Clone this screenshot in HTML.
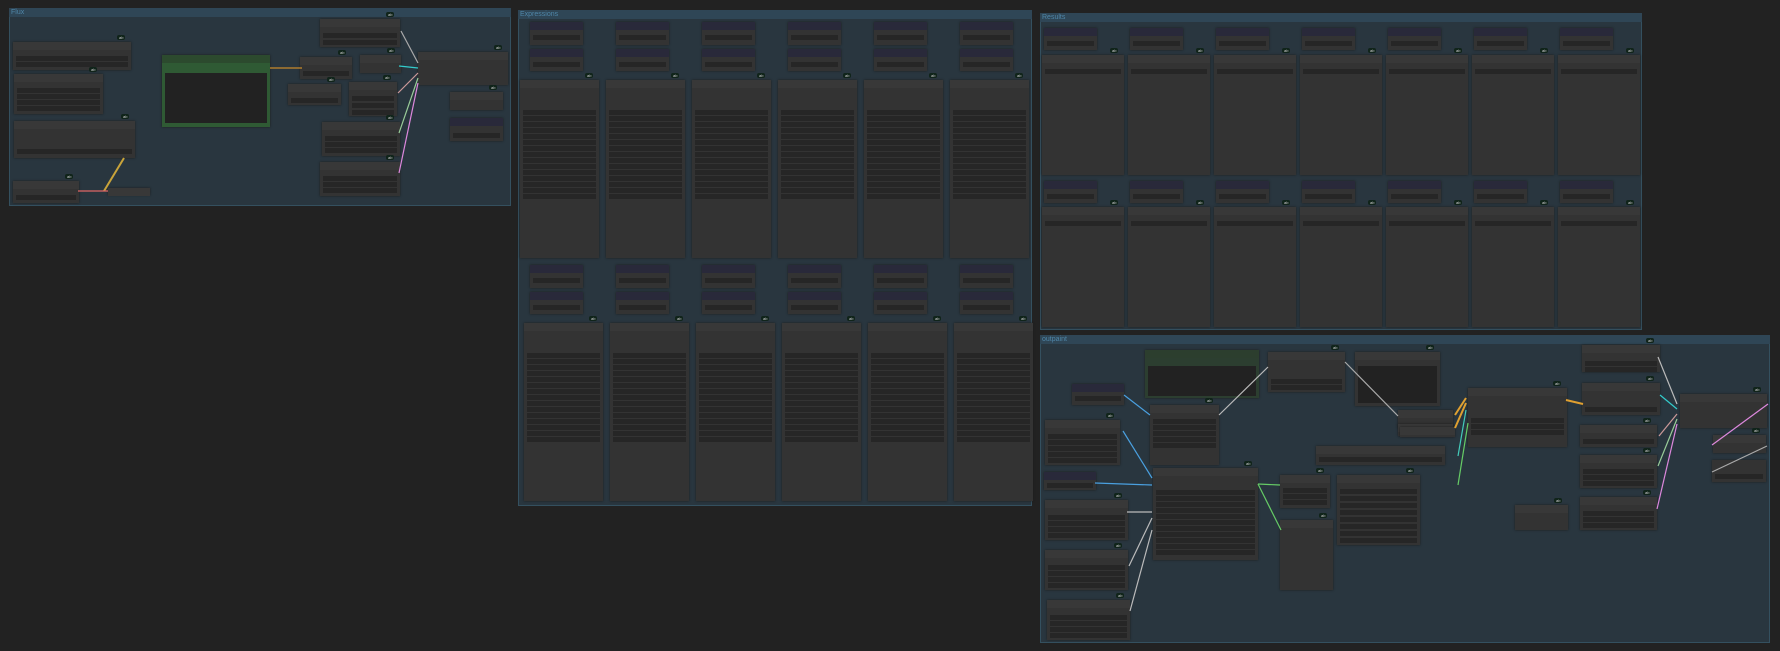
<!DOCTYPE html>
<html><head><meta charset="utf-8"><style>
html,body{margin:0;padding:0;background:#222;width:1780px;height:651px;overflow:hidden;font-family:"Liberation Sans",sans-serif}
.g{position:absolute;background:#29363f;box-shadow:inset 0 0 0 1px #34505f}
.gt{position:absolute;left:0;top:0;right:0;height:9px;background:#2f4656;color:#4f86a8;font-size:7px;line-height:9px;padding-left:2px}
.n{position:absolute;background:#333;box-shadow:0 0 2px #1c1c1c}
.h{position:absolute;left:0;top:0;right:0;height:8px;background:#383838}
.w{position:absolute;height:5px;background:#262626}
.b{position:absolute;height:5px;background:#10241a;border-radius:2px;color:#ccc;font-size:4px;line-height:5px;padding:0 2px}
.d{position:absolute;width:3px;height:3px}
</style></head><body>
<div class="g" style="left:9px;top:8px;width:502px;height:198px"><div class="gt">Flux</div></div>
<div class="g" style="left:518px;top:10px;width:514px;height:496px"><div class="gt">Expressions</div></div>
<div class="g" style="left:1040px;top:13px;width:602px;height:317px"><div class="gt">Results</div></div>
<div class="g" style="left:1040px;top:335px;width:730px;height:308px"><div class="gt">outpaint</div></div>
<div id="c"></div>
<svg width="1780" height="651" style="position:absolute;left:0;top:0" fill="none" stroke-width="1.2">
<path d="M270 68 H302" stroke="#c88a2a"/>
<path d="M401 31 L418 63" stroke="#aaa"/><path d="M399 66 L418 68" stroke="#3cc"/>
<path d="M398 93 L418 73" stroke="#c99"/><path d="M399 133 L418 78" stroke="#9c9"/>
<path d="M399 173 L418 83" stroke="#d8d"/><path d="M104 191 L124 158" stroke="#c9a43a" stroke-width="2"/>
<path d="M78 191 L108 191" stroke="#d66"/>
<path d="M1124 395 L1150 415" stroke="#4aa0e0"/><path d="M1123 431 L1152 478" stroke="#4aa0e0"/>
<path d="M1095 483 L1152 485" stroke="#4aa0e0"/><path d="M1127 512 L1152 512" stroke="#bbb"/>
<path d="M1129 566 L1152 518" stroke="#bbb"/><path d="M1130 611 L1152 530" stroke="#bbb"/>
<path d="M1219 415 L1268 367" stroke="#bbb"/><path d="M1258 484 L1280 485" stroke="#6c6"/>
<path d="M1258 484 L1281 530" stroke="#6c6"/><path d="M1345 362 L1398 416" stroke="#aaa"/>
<path d="M1455 415 L1466 398" stroke="#e0a030" stroke-width="2"/><path d="M1455 428 L1466 403" stroke="#e0a030" stroke-width="2"/>
<path d="M1458 456 L1466 410" stroke="#4cb" /><path d="M1458 485 L1468 423" stroke="#6c6"/>
<path d="M1566 400 L1583 404" stroke="#e0a030" stroke-width="2"/>
<path d="M1658 357 L1677 404" stroke="#bbb"/><path d="M1660 395 L1677 409" stroke="#3cc"/>
<path d="M1659 436 L1677 414" stroke="#c99"/><path d="M1658 466 L1677 419" stroke="#9c9"/>
<path d="M1657 509 L1677 424" stroke="#d8d"/><path d="M1712 445 L1768 404" stroke="#d8d"/>
<path d="M1712 472 L1767 446" stroke="#aaa"/>
</svg>
<script>
var c=document.getElementById('c'),h='';
function n(x,y,w,hh,o){o=o||{};var s='<div class="n" style="left:'+x+'px;top:'+y+'px;width:'+w+'px;height:'+hh+'px;'+(o.bg?'background:'+o.bg:'')+'"><div class="h" style="'+(o.hc?'background:'+o.hc:'')+'"></div>';
var r=o.r||0,ry=o.ry||16;for(var i=0;i<r;i++)s+='<div class="w" style="left:3px;right:3px;top:'+(ry+i*(o.p||7))+'px;'+(o.wh?'height:'+o.wh+'px':'')+'"></div>';
if(o.big)s+='<div class="w" style="left:3px;right:3px;top:'+o.big[0]+'px;height:'+o.big[1]+'px;background:#222"></div>';
s+='</div>';if(o.b)s+='<div class="b" style="left:'+(x+w-14)+'px;top:'+(y-7)+'px">'+o.b+'</div>';h+=s;}
var P='#29293a';
// Flux
n(13,42,118,28,{r:2,ry:14,p:6,b:'ab'});n(14,74,89,40,{r:4,ry:14,p:6,b:'ab'});n(14,121,121,37,{r:1,ry:28,b:'ab'});
n(13,181,66,22,{r:1,ry:14,b:'ab'});n(108,188,42,7,{});
n(162,55,108,72,{hc:'#2c4a2e',bg:'#2f5a34',big:[18,50]});
n(320,19,80,28,{r:2,ry:14,p:7,b:'ab'});n(300,57,52,22,{r:1,ry:14,b:'ab'});n(360,55,41,18,{b:'ab'});
n(288,84,53,21,{r:1,ry:14,b:'ab'});n(349,82,48,34,{r:3,ry:14,p:7,b:'ab'});n(322,122,78,34,{r:3,ry:14,p:6,b:'ab'});
n(320,162,80,34,{r:3,ry:14,p:6,b:'ab'});n(418,52,90,33,{b:'ab'});n(450,92,53,18,{b:'ab'});n(450,118,53,23,{hc:P,r:1,ry:15});
// Expressions
for(var k=0;k<6;k++){var x=520+k*86;
[[22,80],[265,323]].forEach(function(a){n(x+10,a[0],53,23,{hc:P,r:1,ry:13});n(x+10,a[0]+27,53,22,{hc:P,r:1,ry:13});
n(x+(a[0]>100?4:0),a[1],79,178,{r:15,ry:30,p:6,b:'ab'});});}
// Results
for(var k=0;k<7;k++){var x=1042+k*86;
[[28,55],[181,207]].forEach(function(a){n(x+2,a[0],53,22,{hc:P,r:1,ry:13});n(x,a[1],82,120,{r:1,ry:14,b:'ab'});});}
// outpaint
n(1145,350,114,48,{hc:'#2c3e2e',bg:'#2c3e30',big:[16,30]});n(1072,384,52,21,{hc:P,r:1,ry:12});
n(1045,420,75,45,{r:5,ry:14,p:6,b:'ab'});n(1150,405,69,60,{r:5,ry:14,p:6,b:'ab'});n(1044,472,52,18,{hc:P,r:1,ry:11});
n(1045,500,83,40,{r:4,ry:15,p:6,b:'ab'});n(1045,550,83,40,{r:4,ry:15,p:6,b:'ab'});n(1047,600,83,40,{r:4,ry:15,p:6,b:'ab'});
n(1153,468,105,92,{r:11,ry:22,p:6,b:'ab'});n(1268,352,77,40,{r:2,ry:27,p:6,b:'ab'});n(1355,352,85,54,{big:[14,37],b:'ab'});
n(1280,475,50,33,{r:3,ry:13,p:6,b:'ab'});n(1280,520,53,70,{b:'ab'});n(1337,475,83,70,{r:8,ry:14,p:7,b:'ab'});
n(1316,446,129,19,{r:1,ry:11});n(1398,410,55,18,{});n(1398,424,55,12,{});n(1400,427,55,10,{});
n(1468,388,99,59,{r:3,ry:30,p:6,b:'ab'});n(1582,345,78,27,{r:2,ry:16,p:6,b:'ab'});n(1582,383,78,32,{r:1,ry:24,b:'ab'});
n(1580,425,77,22,{r:1,ry:14,b:'ab'});n(1580,455,77,33,{r:3,ry:14,p:6,b:'ab'});n(1580,497,77,33,{r:3,ry:14,p:6,b:'ab'});
n(1680,394,87,34,{b:'ab'});n(1713,435,53,18,{b:'ab'});n(1712,460,54,22,{hc:'#333',r:1,ry:14});n(1515,505,53,25,{b:'ab'});
c.innerHTML=h;
</script>
</body></html>
